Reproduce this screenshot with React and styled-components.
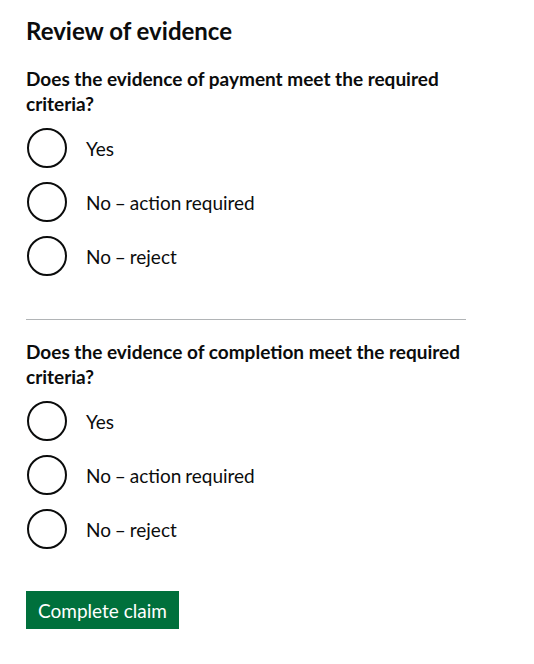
import React from "react";
import styled, { createGlobalStyle } from "styled-components";

const Global = createGlobalStyle`
  html, body { margin: 0; padding: 0; background: #ffffff; }
  body {
    font-family: Lato, "Liberation Sans", Arial, sans-serif;
    color: #0b0c0c;
    -webkit-font-smoothing: antialiased;
  }
`;

const Page = styled.main`
  width: 440px;
  padding: 16px 0 0 26px;
  display: flex;
  flex-direction: column;
`;

const Heading = styled.h2`
  margin: 0 0 20px;
  font-size: 24px;
  line-height: 30px;
  font-weight: 700;
`;

const Fieldset = styled.fieldset`
  margin: 0;
  padding: 0;
  border: 0;
  min-width: 0;
`;

const Legend = styled.legend`
  padding: 0;
  margin: 0 0 12px;
  font-size: 19px;
  line-height: 25px;
  font-weight: 700;
`;

const RadioList = styled.div`
  display: flex;
  flex-direction: column;
  gap: 14px;
`;

const RadioItem = styled.label`
  display: flex;
  align-items: center;
  height: 40px;
  cursor: pointer;
`;

const Circle = styled.span`
  box-sizing: border-box;
  flex: none;
  width: 40px;
  height: 40px;
  margin-left: 1px;
  border: 2px solid #0b0c0c;
  border-radius: 50%;
  background: #ffffff;
`;

const LabelText = styled.span`
  margin-left: 19px;
  font-size: 19px;
  line-height: 25px;
  word-spacing: -1px;
`;

const Divider = styled.hr`
  width: 100%;
  margin: 43px 0 19px;
  border: 0;
  border-top: 1px solid #b1b4b6;
  height: 0;
`;

const Actions = styled.div`
  margin-top: 42px;
  display: flex;
`;

const Button = styled.button`
  font-family: inherit;
  font-size: 19px;
  line-height: 1;
  font-weight: 400;
  color: #ffffff;
  background: #00703c;
  border: 2px solid transparent;
  border-radius: 0;
  padding: 8px 10px 7px;
  box-shadow: 0 2px 0 #002d18;
  cursor: pointer;
`;

const options = ["Yes", "No – action required", "No – reject"];

function Question({ children }) {
  return (
    <Fieldset>
      <Legend>{children}</Legend>
      <RadioList>
        {options.map((o) => (
          <RadioItem key={o}>
            <Circle />
            <LabelText>{o}</LabelText>
          </RadioItem>
        ))}
      </RadioList>
    </Fieldset>
  );
}

export default function App() {
  return (
    <>
      <Global />
      <Page>
        <Heading>Review of evidence</Heading>
        <Question>
          Does the evidence of payment meet the required criteria?
        </Question>
        <Divider />
        <Question>
          Does the evidence of completion meet the required criteria?
        </Question>
        <Actions>
          <Button type="button">Complete claim</Button>
        </Actions>
      </Page>
    </>
  );
}
